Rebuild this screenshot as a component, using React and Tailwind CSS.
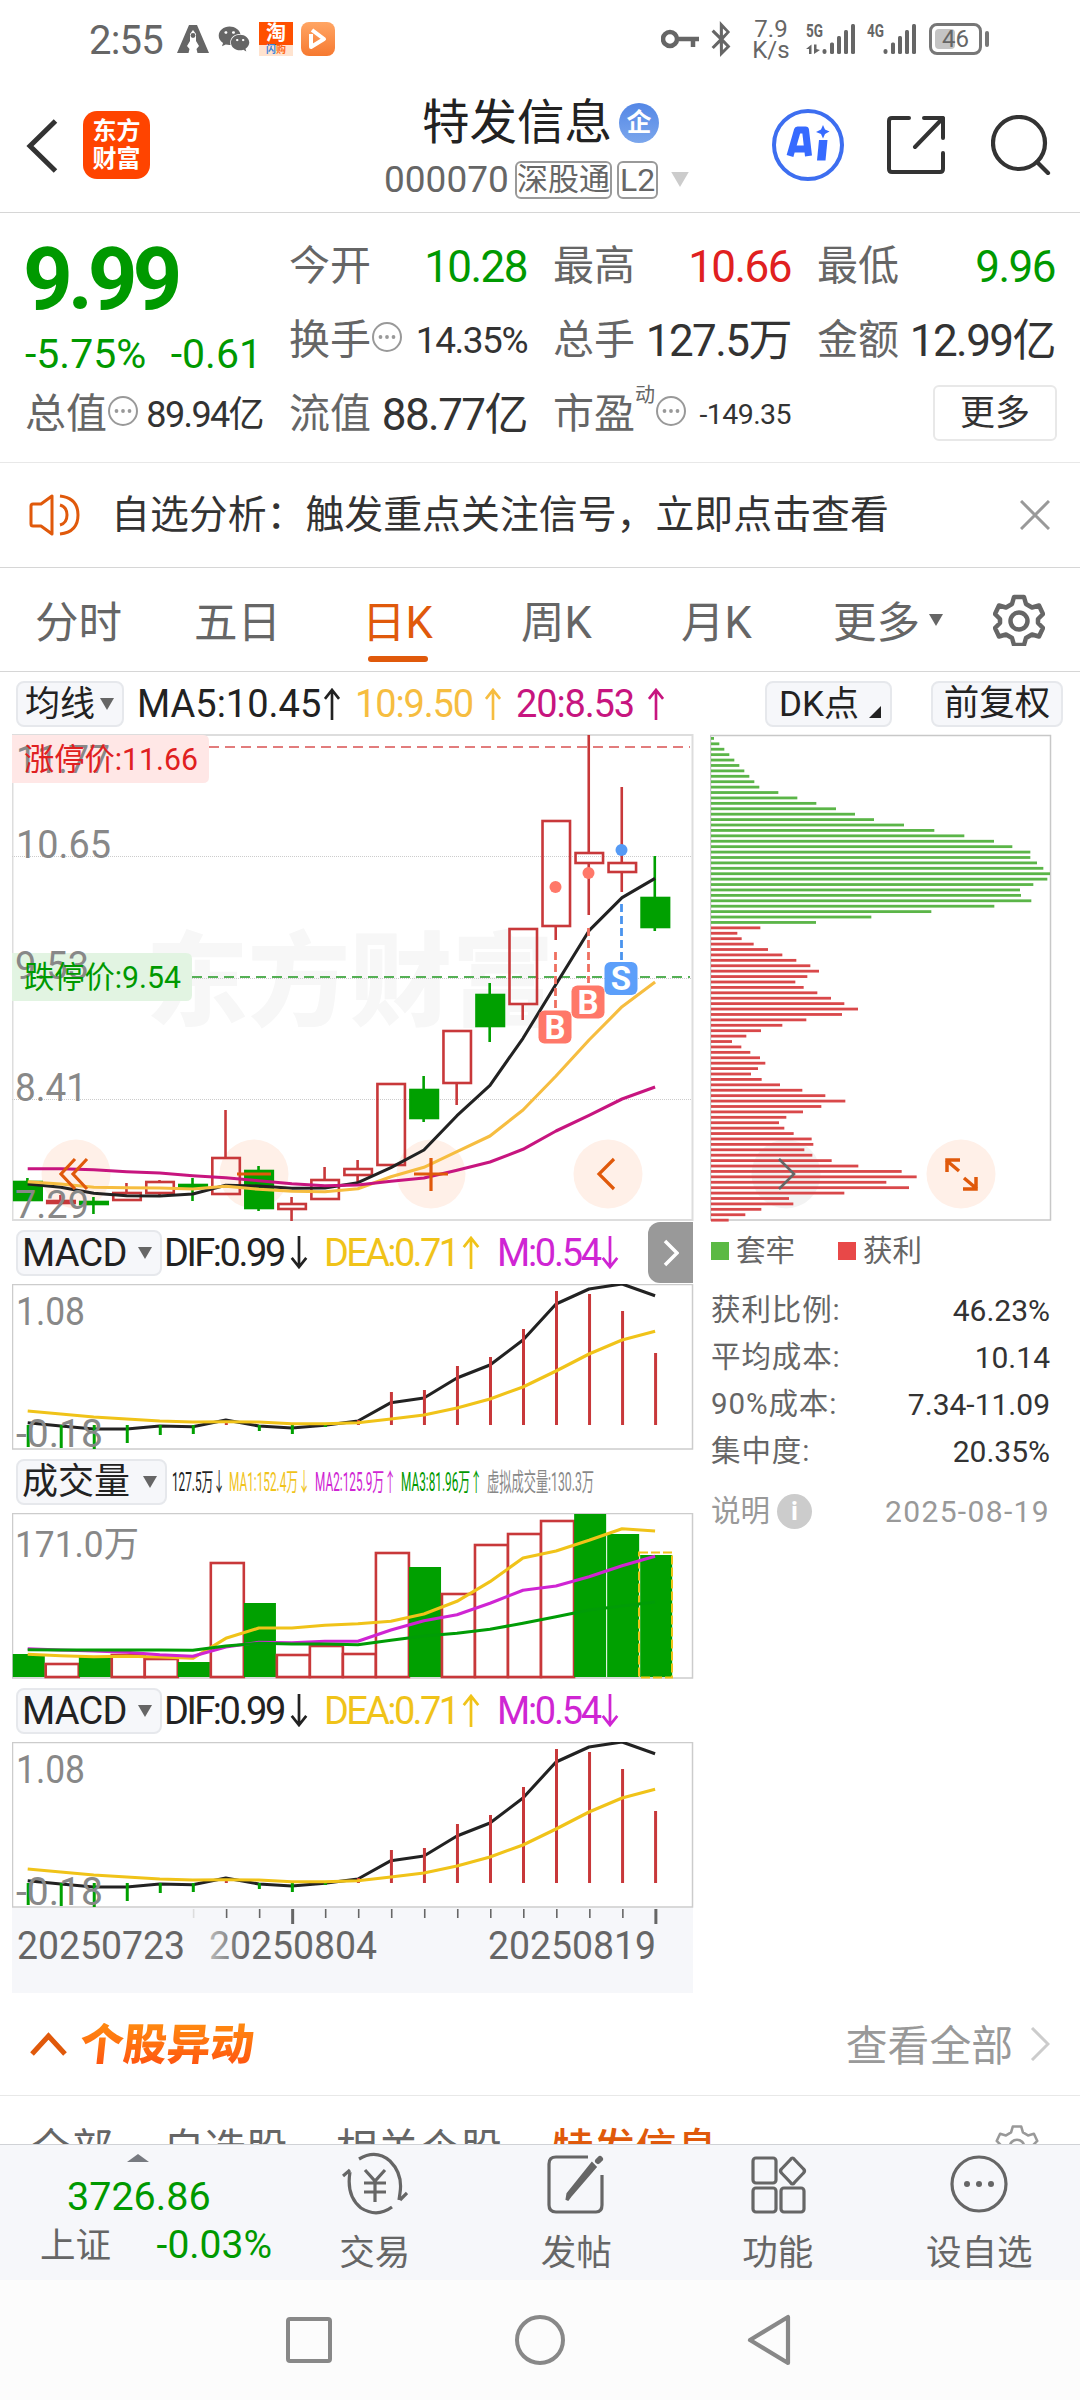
import React from 'react';
import { FaWeixin, FaBluetoothB } from 'react-icons/fa';

const STEP = 33.02;
const xAt = (i) => 27.7 + i * STEP;

// y values are page pixels, the svg viewBoxes below share that space
const CANDLES = [
  { up: false, high: 1178, top: 1181, bottom: 1201, low: 1201 },
  { up: true, high: 1195, top: 1200, bottom: 1204, low: 1205 },
  { up: false, high: 1197, top: 1201, bottom: 1205, low: 1214 },
  { up: true, high: 1183, top: 1192, bottom: 1201, low: 1201 },
  { up: true, high: 1180, top: 1181, bottom: 1194, low: 1195 },
  { up: false, high: 1178, top: 1184, bottom: 1189, low: 1201 },
  { up: true, high: 1110, top: 1157, bottom: 1195, low: 1195 },
  { up: false, high: 1166, top: 1170, bottom: 1209, low: 1211 },
  { up: true, high: 1197, top: 1203, bottom: 1210, low: 1221 },
  { up: true, high: 1167, top: 1179, bottom: 1200, low: 1200 },
  { up: true, high: 1160, top: 1168, bottom: 1176, low: 1182 },
  { up: true, high: 1083, top: 1083, bottom: 1166, low: 1166 },
  { up: false, high: 1076, top: 1089, bottom: 1119, low: 1122 },
  { up: true, high: 1030, top: 1030, bottom: 1084, low: 1105 },
  { up: false, high: 983, top: 994, bottom: 1027, low: 1042 },
  { up: true, high: 928, top: 928, bottom: 1005, low: 1020 },
  { up: true, high: 820, top: 820, bottom: 927, low: 940 },
  { up: true, high: 735, top: 852, bottom: 864, low: 915 },
  { up: true, high: 787, top: 862, bottom: 873, low: 892 },
  { up: false, high: 856, top: 897, bottom: 928, low: 931 },
];

const MA5 = [1184, 1187.3, 1193.3, 1195.7, 1196, 1194, 1185.3, 1186, 1188.3, 1188, 1182.7, 1167.7, 1150, 1115.7, 1085.3, 1038.3, 984.3, 930.7, 897.7, 878.3];
const MA10 = [1181.7, 1184, 1187.3, 1187.7, 1188, 1189, 1186.3, 1189.3, 1191.3, 1191.7, 1188.7, 1176.7, 1167.3, 1151.7, 1136, 1110, 1076, 1040, 1006.7, 982];
const MA20 = [1168.7, 1168.7, 1169.7, 1171.7, 1173, 1175.7, 1177.7, 1180.7, 1183.7, 1185.7, 1185, 1181.3, 1178, 1170.3, 1162, 1149.3, 1131, 1115.3, 1099, 1087];

const DIF = [1422.7, 1426, 1429, 1429, 1426, 1426.7, 1420, 1426, 1428, 1425.3, 1421, 1402.7, 1398, 1378, 1365, 1340, 1304, 1289, 1284, 1295.7];
const DEA = [1411, 1414, 1417, 1419, 1421, 1422, 1421.7, 1422, 1423.7, 1423.7, 1422.7, 1419, 1415, 1408, 1399, 1387, 1371, 1354, 1340, 1331.3];
const MACD = [1447, 1448, 1449, 1443, 1435, 1434, 1421, 1431, 1434, 1427, 1420, 1392, 1390, 1366, 1357, 1329, 1291, 1294, 1311, 1353];

const VOLUMES = [
  [0, 1654], [1, 1663], [0, 1657], [1, 1654], [1, 1658], [0, 1662], [1, 1562], [0, 1603], [1, 1654], [1, 1645],
  [1, 1653], [1, 1552], [0, 1567], [1, 1593], [1, 1544], [1, 1533], [1, 1520], [0, 1514], [0, 1534], [0, 1555],
];
const VMA1 = [1654.3, 1655.7, 1656.7, 1656.3, 1657, 1658.3, 1638.3, 1628, 1628, 1625.3, 1623.7, 1621.3, 1614, 1601.3, 1581.7, 1558, 1551, 1540.3, 1528.7, 1531];
const VMA2 = [1648.7, 1650, 1651, 1652.3, 1654.7, 1656.3, 1647, 1642.3, 1642.7, 1641.3, 1641.3, 1630, 1620.7, 1614.7, 1603.3, 1590.3, 1586, 1576.7, 1565.7, 1556.3];
const VMA3 = [1649.7, 1650, 1650, 1650, 1650, 1650.3, 1646, 1643.3, 1644, 1644, 1644.7, 1640.3, 1636, 1633.3, 1629.3, 1623.3, 1616.7, 1610, 1606, 1602];

const CHIPS = [
  9, 25, 40, 55, 70, 85, 100, 115, 130, 145, 202, 259, 316, 375, 432, 489, 579, 670, 760, 849, 904, 958, 958, 978, 997,
  1017, 1009, 967, 927, 930, 961, 850, 661, 481, 315, 148, 79, 92, 128, 171, 214, 256, 298, 324, 289, 253, 278, 319, 360,
  400, 441, 393, 286, 214, 150, 106, 63, 91, 118, 147, 163, 141, 120, 152, 207, 274, 343, 403, 331, 276, 226, 204, 220,
  248, 302, 307, 280, 304, 362, 442, 572, 617, 526, 594, 400, 234, 247, 151, 103, 53,
];

const points = (values) => values.map((y, i) => `${xAt(i)},${y}`).join(' ');

const Line = ({ values, color, width = 3.1 }) => (
  <polyline points={points(values)} fill="none" stroke={color} strokeWidth={width} strokeLinejoin="round" />
);

const ChartLabel = ({ x, y, width, children, color = '#888', size = 38 }) => (
  <text x={x} y={y} textLength={width} lengthAdjust="spacingAndGlyphs" fontSize={size} fill={color}>
    {children}
  </text>
);

const More = () => (
  <svg viewBox="0 0 32 32" className="h-8 w-8 shrink-0 -translate-y-1">
    <circle cx="16" cy="16" r="14" fill="none" stroke="#999" strokeWidth="2" />
    <circle cx="9.5" cy="16" r="1.9" fill="#999" />
    <circle cx="16" cy="16" r="1.9" fill="#999" />
    <circle cx="22.500" cy="16" r="1.9" fill="#999" />
  </svg>
);

const Down = ({ className }) => (
  <svg viewBox="0 0 14 12" className={className}>
    <path d="M0 0h14L7 12z" fill="currentColor" />
  </svg>
);

const Arrow = ({ up, className }) => (
  <svg viewBox="0 0 18 34" className={className} fill="none" stroke="currentColor" strokeWidth="2.8">
    <path d={up ? 'M9 34V2M1.500 11.500 9 2l7.500 9.500' : 'M9 0v32M1.500 22.500 9 32l7.500-9.500'} />
  </svg>
);

const Gear = ({ className, width = 4.5 }) => (
  <svg viewBox="0 0 52 52" className={className} fill="none" stroke="currentColor" strokeWidth={width} strokeLinejoin="round">
    <path d="M21 3h10l2 7 6 3.500 7-2 4 8.500-5 5v4l5 5-4 8.500-7-2-6 3.500-2 7H21l-2-7-6-3.500-7 2L2 34l5-5v-4l-5-5 4-8.500 7 2 6-3.500z" />
    <circle cx="26" cy="27" r="8.500" />
  </svg>
);

const Signal = ({ label, data }) => (
  <svg viewBox="0 0 50 32" className="h-8 w-[50px] shrink-0 overflow-visible" fill="#666">
    <text x="0" y="14" fontSize="18.500" fontWeight="700" textLength="17" lengthAdjust="spacingAndGlyphs">{label}</text>
    {data && <path d="M5.500 21.500V31H3v-5H0zM8 31v-9.500h2.500V26l3.500 1z" />}
    <rect x="16.500" y="26" width="4" height="5" rx="2" />
    <rect x="24" y="19.500" width="4" height="11.500" rx="1.500" />
    <rect x="31" y="13" width="4" height="18" rx="1.500" />
    <rect x="38" y="7" width="4" height="24" rx="1.500" />
    <rect x="45" y="1" width="4" height="30" rx="1.500" />
  </svg>
);

function StatusBar() {
  return (
    <div className="flex h-[78px] items-center pl-[89px] text-[#666]">
      <span className="w-[88px] shrink-0 pt-1 text-[40px] leading-none tracking-[-0.02em]">2:55</span>
      <svg viewBox="0 0 32 28" className="h-7 w-8 shrink-0">
        <path d="M12 0h8l12 28H20.500l-1-4 2.500-3-3-5V9l-3-4-3 4v7l-3 5 2.500 3-1 4H0z" fill="#666" />
        <circle cx="16" cy="10.500" r="2.400" fill="#666" />
      </svg>
      <FaWeixin className="ml-[9px] h-8 w-8 shrink-0" />
      <div className="ml-[9px] flex h-[34px] w-[34px] shrink-0 flex-col items-center bg-[#ff5000]">
        <span className="h-[23px] text-[20px] font-bold leading-[22px] text-white">淘</span>
        <span className="h-[11px] w-full bg-[#ffe3cf] text-center text-[10px] font-bold leading-[10px] text-[#ff6a1a]">
          <span className="text-[#3b82d8]">闪</span>购
        </span>
      </div>
      <div className="ml-2 flex h-[34px] w-[34px] shrink-0 items-center justify-center rounded-lg bg-gradient-to-b from-[#ffa563] to-[#f6792f]">
        <svg viewBox="0 0 20 24" className="h-6 w-5">
          <path d="M3 7v13l13-8L4 3" fill="none" stroke="white" strokeWidth="4" strokeLinejoin="round" />
        </svg>
      </div>
      <svg viewBox="0 0 40 20" className="ml-[326px] h-5 w-10 shrink-0" fill="none" stroke="#666" strokeWidth="4.500">
        <circle cx="9" cy="10" r="7" />
        <path d="M16 10h22M32 10v8" />
      </svg>
      <FaBluetoothB className="ml-[6px] h-9 w-[28px] shrink-0" />
      <div className="ml-[16px] flex w-[40px] shrink-0 flex-col items-center pt-0.5 text-[24px] leading-[21px]">
        <span>7.9</span>
        <span>K/s</span>
      </div>
      <div className="ml-[15px]">
        <Signal label="5G" data />
      </div>
      <div className="ml-[11px]">
        <Signal label="4G" />
      </div>
      <div className="relative ml-[12px] h-8 w-[53px] shrink-0 rounded-lg border-[3px] border-[#777] p-[3px]">
        <div className="h-full w-5 rounded-sm bg-[#c4c4c4]" />
        <span className="absolute inset-0 text-center text-[24px] leading-[27px]">46</span>
      </div>
      <div className="ml-[3px] h-4 w-1 shrink-0 rounded-sm bg-[#777]" />
    </div>
  );
}

function Header() {
  return (
    <header className="flex h-[135px] items-center border-b border-[#d6d6d6] pl-[26px]">
      <svg viewBox="0 0 32 54" className="mt-[2px] h-[54px] w-8" fill="none" stroke="#333" strokeWidth="5">
        <path d="M29.500 2 4 27l25.500 25" />
      </svg>
      <div className="ml-[25px] flex h-[68px] w-[67px] flex-col items-center justify-center rounded-[14px] bg-[#ff4400] text-[24px] font-bold leading-[28px] text-white">
        <span>东方</span>
        <span>财富</span>
      </div>
      <div className="ml-[233px] w-[310px] pt-[11px]">
        <div className="flex h-[58px] items-center pl-[39px]">
          <h1 className="text-[47.500px] leading-none text-[#222]">特发信息</h1>
          <span className="-mt-[2px] ml-[7px] flex h-10 w-10 items-center justify-center rounded-full bg-gradient-to-b from-[#5487e6] to-[#7ba6ec] text-[25px] font-bold text-white">企</span>
        </div>
        <div className="flex h-[54px] items-center pl-px text-[#666]">
          <span className="w-[131px] text-[37px] leading-none">000070</span>
          <span className="flex h-[38px] w-[97px] items-center justify-center rounded-md border-2 border-[#999] text-[31px] leading-none">深股通</span>
          <span className="ml-[5px] flex h-[38px] w-[41px] items-center justify-center rounded-md border-2 border-[#999] text-[32px] leading-none">L2</span>
          <Down className="ml-[11px] h-[15px] w-[22px] text-[#ccc]" />
        </div>
      </div>
      <svg viewBox="0 0 72 72" className="ml-[79px] h-[72px] w-[72px]">
        <circle cx="36" cy="36" r="34" fill="none" stroke="#3d6ef0" strokeWidth="4" />
        <path d="m51 16 2 4.500 4.500 2L53 25l-2 4.500-2-4.500-5-2 5-2.500z" fill="#366aff" />
        <path d="M18 47 25.500 21h8l3 26M22 40h14" fill="none" stroke="#366aff" strokeWidth="7" strokeLinejoin="round" />
        <path d="M47 31h8.500l-2 20.500H45z" fill="#366aff" />
      </svg>
      <svg viewBox="0 0 58 58" className="ml-[43px] h-[58px] w-[58px]" fill="none" stroke="#333" strokeWidth="4" strokeLinecap="round" strokeLinejoin="round">
        <path d="M22 2H5Q2 2 2 5v48q0 3 3 3h48q3 0 3-3V37" />
        <path d="M37 2h19v20M56 2 28 31" />
      </svg>
      <svg viewBox="0 0 60 60" className="ml-[46px] h-[60px] w-[60px]" fill="none" stroke="#333" strokeWidth="4.200" strokeLinecap="round">
        <circle cx="28" cy="28" r="26" />
        <path d="m46 47 11 11" />
      </svg>
    </header>
  );
}

const STATS = [
  { label: '今开', value: '10.28', color: 'text-[#009900]' },
  { label: '最高', value: '10.66', color: 'text-[#e02020]' },
  { label: '最低', value: '9.96', color: 'text-[#009900]' },
  { label: '换手', value: '14.35%', more: true, size: 'text-[37px] tracking-[-0.04em]' },
  { label: '总手', value: '127.5万' },
  { label: '金额', value: '12.99亿' },
];

const Stat = ({ label, value, color = 'text-[#333]', size = 'text-[44px] tracking-[-0.035em]', more, sup }) => (
  <div className="flex h-[74px] items-center">
    <span className="text-[41px] text-[#666]">{label}</span>
    {sup && <span className="-mr-1 w-[24px] -translate-y-5 text-[20px] text-[#666]">{sup}</span>}
    {more && <More />}
    <span className={`ml-auto whitespace-nowrap ${size} ${color}`}>{value}</span>
  </div>
);

function Quote() {
  return (
    <section className="h-[250px] border-b border-[#e8e8e8] pl-[25px] pt-[17px]">
      <div className="flex">
        <div className="w-[264px] text-[#009900]">
          <div className="-ml-[2px] pt-[3px] text-[87px] font-bold leading-[92px] tracking-[-0.06em]">9.99</div>
          <div className="flex w-[237px] justify-between pt-[4px] text-[41px] leading-[50px]">
            <span>-5.75%</span>
            <span>-0.61</span>
          </div>
        </div>
        <div className="grid h-[145px] grid-cols-[238px_238px_238px] gap-x-[26px]">
          {STATS.map((s) => (
            <Stat key={s.label} {...s} />
          ))}
        </div>
      </div>
      <div className="-mt-[1px] grid grid-cols-[238px_238px_238px_240px] gap-x-[26px]">
        <Stat label="总值" value="89.94亿" more size="text-[36px] tracking-[-0.045em]" />
        <Stat label="流值" value="88.77亿" />
        <Stat label="市盈" value="-149.35" sup="动" more size="text-[28.500px] tracking-[-0.02em]" />
        <button className="mt-[7px] ml-auto h-[56px] w-[124px] rounded-md border-2 border-[#e8e8e8] text-[35px] leading-none text-[#333]">更多</button>
      </div>
    </section>
  );
}

function Notice() {
  return (
    <div className="flex h-[105px] items-center border-b border-[#d6d6d6] pl-[29px]">
      <svg viewBox="0 0 52 42" className="h-[42px] w-[52px]" fill="none" stroke="#e0590b" strokeWidth="3" strokeLinejoin="round">
        <path d="M23 2v38L12 32H4q-2 0-2-2V12q0-2 2-2h8z" />
        <path d="M31 11q7 2 7 10t-7 10M31 2q18 2 18 19T31 40" />
      </svg>
      <span className="ml-[30px] text-[38.900px] text-[#333]">自选分析：触发重点关注信号，立即点击查看</span>
      <svg viewBox="0 0 30 30" className="ml-auto mr-[30px] h-[30px] w-[30px]" fill="none" stroke="#999" strokeWidth="3">
        <path d="m1 1 28 28M29 1 1 29" />
      </svg>
    </div>
  );
}

function PeriodTabs() {
  return (
    <nav className="flex h-[104px] items-center border-b border-[#d6d6d6] pl-[35px] text-[43.500px] text-[#666]">
      <span className="w-[159px] pt-[8px]">分时</span>
      <span className="w-[168px] pt-[8px]">五日</span>
      <span className="relative w-[159px] pt-[8px] text-[#e0590b]">
        日K
        <span className="absolute -bottom-[6px] left-[6px] h-[6px] w-[60px] rounded-full bg-[#e0590b]" />
      </span>
      <span className="w-[160px] pt-[8px]">周K</span>
      <span className="w-[152px] pt-[8px]">月K</span>
      <span className="pt-[8px]">更多</span>
      <Down className="ml-[9px] h-3 w-[14px]" />
      <Gear className="ml-auto mr-[35px] h-[52px] w-[52px]" />
    </nav>
  );
}

const Chip = ({ className, children }) => (
  <span className={`flex items-center rounded-lg border-2 border-[#e6e8ec] bg-[#f6f7fa] text-[#222] ${className}`}>{children}</span>
);

function MaBar() {
  return (
    <div className="flex h-[60px] items-center pl-4 text-[38px] leading-none">
      <Chip className="h-[46px] w-[108px] pl-[7px] text-[35px]">
        均线
        <Down className="ml-[5px] h-[12px] w-[14px] text-[#666]" />
      </Chip>
      <span className="ml-[13px] flex w-[218px] items-center text-[#222]">
        <span className="w-[185px]">MA5:10.45</span>
        <Arrow up className="h-[32px] w-[20px]" />
      </span>
      <span className="flex w-[161px] items-center text-[#f6bd40]">
        <span className="w-[128px] tracking-[-0.03em]">10:9.50</span>
        <Arrow up className="h-[32px] w-[20px]" />
      </span>
      <span className="flex items-center text-[#c7157f]">
        <span className="w-[130px] tracking-[-0.03em]">20:8.53</span>
        <Arrow up className="h-[32px] w-[20px]" />
      </span>
      <Chip className="ml-[99px] h-[46px] w-[127px] pl-3 text-[35px]">
        DK点
        <svg viewBox="0 0 12 12" className="mt-4 ml-2.5 h-3 w-3">
          <path d="M12 0v12H0z" fill="#222" />
        </svg>
      </Chip>
      <Chip className="ml-[39px] h-[46px] w-[132px] justify-center text-[35.500px]">前复权</Chip>
    </div>
  );
}

const Badge = ({ x, y, color, children }) => (
  <g>
    <rect x={x - 16.5} y={y} width="33" height="33" rx="6" fill={color} />
    <text x={x} y={y + 28} textAnchor="middle" fontSize="33" fontWeight="700" fill="white">{children}</text>
  </g>
);

function PriceChart() {
  return (
    <svg viewBox="12 734 682 488" className="h-[488px] w-[682px]">
      <rect x="12.500" y="735" width="680" height="485" fill="white" stroke="#ddd" strokeWidth="2" />
      <text x="146" y="1018" fontSize="102" fontWeight="900" fill="#f7f7f7" textLength="408" lengthAdjust="spacingAndGlyphs">东方财富</text>
      {[856, 978, 1099].map((y) => (
        <line key={y} x1="12" x2="692" y1={y + 0.5} y2={y + 0.5} stroke="#ccc" strokeDasharray="1 1" />
      ))}
      <line x1="209" x2="690" y1="747" y2="747" stroke="#e27c7c" strokeWidth="2" strokeDasharray="10 6" />
      <line x1="192" x2="690" y1="977" y2="977" stroke="#55b055" strokeWidth="2" strokeDasharray="10 6" />
      <path d="M12 735h191q6 0 6 6v36q0 6-6 6H12z" fill="#ffe7e6" />
      <path d="M12 953h174q6 0 6 6v36q0 6-6 6H12z" fill="#e2f4e2" />
      {[76, 254, 431, 608].map((x) => (
        <circle key={x} cx={x} cy="1174" r="34.500" fill="#fff0e8" />
      ))}
      {CANDLES.map((c, i) => {
        const x = xAt(i);
        const color = c.up ? '#c8383a' : '#00a000';
        return (
          <g key={i} stroke={color} strokeWidth="2.600">
            <line x1={x - 0.3} x2={x - 0.3} y1={c.high} y2={c.top} />
            <line x1={x - 0.3} x2={x - 0.3} y1={c.bottom} y2={c.low} />
            <rect x={x - 13.5} y={c.top + 1} width="27.500" height={Math.max(c.bottom - c.top - 2, 2)} fill={c.up ? 'none' : color} />
          </g>
        );
      })}
      <Line values={MA5} color="#222" />
      <Line values={MA10} color="#f6bd40" />
      <Line values={MA20} color="#c7157f" />
      <g fill="none" stroke="#e0590b" strokeWidth="3.200">
        <path d="m75 1159-14 15 14 15M87 1159l-14 15 14 15" />
        <path d="M237 1174h34M414 1174h34M431 1158v33" />
        <path d="m614 1159-15 15 15 15" />
      </g>
      <g strokeWidth="2.800" strokeDasharray="8 4">
        <path d="M555.500 952v56M588.500 928v55" stroke="#ef6f60" />
        <path d="M621.500 904v56" stroke="#4a94ee" />
      </g>
      <circle cx="555.500" cy="887" r="6" fill="#ff7869" />
      <circle cx="588.500" cy="873" r="6" fill="#ff7869" />
      <circle cx="621.500" cy="850" r="6" fill="#559af5" />
      <Badge x={555} y={1010.5} color="#ff7869">B</Badge>
      <Badge x={588} y={985.5} color="#ff7869">B</Badge>
      <Badge x={621} y={962} color="#5c9ffa">S</Badge>
      <ChartLabel x={16} y={773} width={94}>11.77</ChartLabel>
      <ChartLabel x={16} y={857.5} width={95}>10.65</ChartLabel>
      <ChartLabel x={15} y={979} width={74}>9.53</ChartLabel>
      <ChartLabel x={15} y={1100.5} width={72}>8.41</ChartLabel>
      <ChartLabel x={15} y={1217.5} width={74}>7.29</ChartLabel>
      <ChartLabel x={24} y={770} width={174} color="#e02020" size={31}>涨停价:11.66</ChartLabel>
      <ChartLabel x={24} y={988} width={157} color="#009900" size={31}>跌停价:9.54</ChartLabel>
    </svg>
  );
}

function MacdHeader() {
  return (
    <div className="flex h-[60px] items-center pl-1 pt-px text-[38px] leading-none">
      <Chip className="h-[46px] w-[146px] pl-[4px]">
        <span className="w-[116px] tracking-[-0.02em]">MACD</span>
        <Down className="h-[12px] w-[14px] text-[#666]" />
      </Chip>
      <span className="ml-[2px] flex w-[160px] items-center text-[#222]">
        <span className="w-[125px] tracking-[-0.065em]">DIF:0.99</span>
        <Arrow className="h-[33px] w-5" />
      </span>
      <span className="flex w-[173px] items-center text-[#f0c319]">
        <span className="w-[137px] tracking-[-0.07em]">DEA:0.71</span>
        <Arrow up className="h-[33px] w-5" />
      </span>
      <span className="flex items-center text-[#cf25d3]">
        <span className="w-[103px] tracking-[-0.06em]">M:0.54</span>
        <Arrow className="h-[33px] w-5" />
      </span>
    </div>
  );
}

function MacdChart() {
  return (
    <svg viewBox="12 1284 682 166" className="h-[166px] w-[682px]">
      <rect x="12.500" y="1284.500" width="680" height="164.500" fill="white" stroke="#ccc" strokeWidth="1.500" />
      <Line values={DIF} color="#222" />
      {MACD.map((y, i) => (
        <line key={i} x1={xAt(i) + 0.5} x2={xAt(i) + 0.5} y1="1425" y2={y} stroke={y > 1425 ? '#00a000' : '#c8383a'} strokeWidth="3" />
      ))}
      <Line values={DEA} color="#f0c319" />
      <ChartLabel x={16} y={1325} width={69}>1.08</ChartLabel>
      <ChartLabel x={16} y={1447} width={87}>-0.18</ChartLabel>
    </svg>
  );
}

const VOLUME_LEGEND = [
  { text: '127.5万↓', color: '#222', x: 0, w: 53 },
  { text: 'MA1:152.4万↓', color: '#f0c319', x: 57, w: 81 },
  { text: 'MA2:125.9万↑', color: '#cf25d3', x: 143, w: 81 },
  { text: 'MA3:81.96万↑', color: '#009900', x: 229, w: 81 },
  { text: '虚拟成交量:130.3万', color: '#888', x: 315, w: 107 },
];

function VolumeHeader() {
  return (
    <div className="flex h-[64px] items-center pl-1 leading-none">
      <Chip className="h-[46px] w-[151px] pl-[4px] text-[36px]">
        <span className="w-[121px]">成交量</span>
        <Down className="h-[12px] w-[14px] text-[#666]" />
      </Chip>
      <svg viewBox="0 0 430 34" className="ml-[5px] h-[34px] w-[430px]">
        {VOLUME_LEGEND.map((l) => (
          <text key={l.text} x={l.x} y="26" fontSize="25" fill={l.color} textLength={l.w} lengthAdjust="spacingAndGlyphs">{l.text}</text>
        ))}
      </svg>
    </div>
  );
}

function VolumeChart() {
  return (
    <svg viewBox="12 1513 682 166" className="h-[166px] w-[682px]">
      <rect x="12.500" y="1513.500" width="680" height="164.500" fill="white" stroke="#ccc" strokeWidth="1.500" />
      {VOLUMES.map(([up, y], i) => {
        const x = 12 + i * STEP;
        return up ? (
          <rect key={i} x={x + 0.7} y={y + 1} width="33" height={1676 - y} fill="white" stroke="#c8383a" strokeWidth="2.600" />
        ) : (
          <rect key={i} x={x + 0.8} y={y} width="32" height={1677 - y} fill="#00a000" />
        );
      })}
      <rect x="639" y="1552.500" width="33" height="125" fill="none" stroke="#f0c319" strokeWidth="2" strokeDasharray="9 3" />
      <Line values={VMA1} color="#f0c319" />
      <Line values={VMA2} color="#cf25d3" />
      <Line values={VMA3} color="#009c06" />
      <ChartLabel x={15} y={1557} width={124} size={36}>171.0万</ChartLabel>
    </svg>
  );
}

function DateAxis() {
  return (
    <svg viewBox="12 1908 681 85" className="h-[85px] w-[681px] bg-[#f6f7fa]">
      {CANDLES.map((_, i) => {
        if (i < 5) return null;
        const major = i === 8 || i === 19;
        return (
          <line key={i} x1={xAt(i) + 0.8} x2={xAt(i) + 0.8} y1="1909" y2={major ? 1924 : 1918} stroke={i === 5 ? '#ddd' : '#666'} strokeWidth={major ? 3 : 1.6} />
        );
      })}
      <defs>
        <linearGradient id="fade">
          <stop offset="0" stopColor="#bbb" />
          <stop offset="0.200" stopColor="#666" />
        </linearGradient>
      </defs>
      <ChartLabel x={17} y={1959} width={168} color="#666">20250723</ChartLabel>
      <ChartLabel x={209} y={1959} width={168} color="url(#fade)">20250804</ChartLabel>
      <ChartLabel x={488} y={1959} width={168} color="#666">20250819</ChartLabel>
    </svg>
  );
}

const COSTS = [
  ['获利比例:', '46.23%'],
  ['平均成本:', '10.14'],
  ['90%成本:', '7.34-11.09'],
  ['集中度:', '20.35%'],
];

function ChipPanel() {
  return (
    <div className="ml-[17px] w-[340px] text-[29.500px]">
      <svg viewBox="710 734 342 488" className="h-[488px] w-[342px]">
        <rect x="710.500" y="735.500" width="340" height="484.500" fill="white" stroke="#c8c8c8" strokeWidth="1.500" />
        <circle cx="786" cy="1174" r="34.500" fill="#f3f3f3" />
        {CHIPS.map((len, i) => (
          <rect key={i} x="711" y={737 + i * 5.413} width={len / 3} height="2.800" fill={i < 35 ? '#5bb548' : '#d9484a'} />
        ))}
        <path d="m779 1159 15 15-15 15" fill="none" stroke="#666" strokeWidth="2.600" />
        <circle cx="961" cy="1174" r="34.500" fill="#fff0e8" />
        <path d="M959 1171l-13-11M947 1172v-12h13M964 1178l13 11M976 1177v12h-13" fill="none" stroke="#e0590b" strokeWidth="3.500" />
      </svg>
      <div className="mt-[6px] flex h-[46px] items-center pl-px text-[#666]">
        <span className="h-[18px] w-[18px] bg-[#5bb944]" />
        <span className="ml-[7px] w-[102px]">套牢</span>
        <span className="h-[18px] w-[18px] bg-[#e84848]" />
        <span className="ml-[7px]">获利</span>
      </div>
      <div className="mt-[13px] pl-px">
        {COSTS.map(([label, value]) => (
          <div key={label} className="flex h-[47px] items-center justify-between">
            <span className="tracking-[0.03em] text-[#666]">{label}</span>
            <span className="text-[30px] text-[#333]">{value}</span>
          </div>
        ))}
      </div>
      <div className="mt-[11px] flex h-[50px] items-center pl-px text-[#999]">
        <span>说明</span>
        <span className="ml-[7px] flex h-[35px] w-[35px] items-center justify-center rounded-full bg-[#ccc] text-[26px] font-bold text-white">i</span>
        <span className="ml-auto text-[30px] tracking-[0.045em]">2025-08-19</span>
      </div>
    </div>
  );
}

function Charts() {
  return (
    <div className="flex pl-3">
      <div className="flex w-[681px] flex-col">
        <PriceChart />
        <div className="relative">
          <MacdHeader />
          <div className="absolute top-0 right-0 flex h-[61px] w-[45px] items-center justify-center rounded-l-xl bg-[#999]">
            <svg viewBox="0 0 16 28" className="h-7 w-4" fill="none" stroke="white" strokeWidth="3.500">
              <path d="m2 2 12 12L2 26" />
            </svg>
          </div>
        </div>
        <div className="mt-[2px]">
          <MacdChart />
        </div>
        <VolumeHeader />
        <div className="-mt-px">
          <VolumeChart />
        </div>
        <div className="mt-[1px]">
          <MacdHeader />
        </div>
        <div className="mt-[2px]">
          <MacdChart />
        </div>
        <DateAxis />
      </div>
      <ChipPanel />
    </div>
  );
}

function Movements() {
  return (
    <section>
      <div className="flex h-[103px] items-center border-b border-[#e8e8e8] pl-[30px]">
        <svg viewBox="0 0 37 24" className="h-6 w-[37px]" fill="none" stroke="#e0590b" strokeWidth="5">
          <path d="M2 22 18.500 4 35 22" />
        </svg>
        <h2 className="mt-[3px] ml-[13px] w-[176px] -skew-x-6 bg-gradient-to-b from-[#ff8a10] to-[#ff4d10] bg-clip-text text-[43.500px] font-black leading-[46px] text-transparent">个股异动</h2>
        <span className="ml-auto pt-[6px] text-[41.800px] text-[#999]">查看全部</span>
        <svg viewBox="0 0 20 34" className="ml-[17px] mr-[30px] h-[34px] w-5" fill="none" stroke="#ccc" strokeWidth="3">
          <path d="m2 1 16 16L2 33" />
        </svg>
      </div>
      <div className="flex h-[48px] items-start overflow-hidden pl-[30px] text-[41.500px] leading-[48px] text-[#666]">
        <span className="mt-[30px] w-[133px]">全部</span>
        <span className="mt-[30px] w-[173px]">自选股</span>
        <span className="mt-[30px] w-[216px]">相关个股</span>
        <span className="mt-[30px] font-medium text-[#e0590b]">特发信息</span>
        <Gear className="mt-[28px] ml-auto mr-[41px] h-[44px] w-[44px] shrink-0 text-[#999]" width={3} />
      </div>
    </section>
  );
}

const Action = ({ label, children }) => (
  <div className="flex w-[201.500px] flex-col items-center">
    <svg viewBox="0 0 66 66" className="h-[66px] w-[66px]" fill="none" stroke="#666" strokeWidth="3.200">
      {children}
    </svg>
    <span className="mt-[11px] text-[35.500px] leading-[50px]">{label}</span>
  </div>
);

function BottomBar() {
  return (
    <div className="flex h-[136px] border-t border-[#d0d2d6] bg-[#f6f7fa] text-[#666]">
      <div className="w-[275px] pl-[40px]">
        <svg viewBox="0 0 22 8" className="mt-[9px] ml-[87px] h-2 w-[22px]">
          <path d="M0 8 11 0l11 8z" fill="#777a80" />
        </svg>
        <div className="mt-[12px] ml-[27px] text-[39.500px] leading-[46px] text-[#009900]">3726.86</div>
        <div className="mt-[1px] flex w-[232px] items-center justify-between text-[35.500px] leading-[50px]">
          <span>上证</span>
          <span className="-mt-[2px] text-[39px] text-[#009900]">-0.03%</span>
        </div>
      </div>
      <div className="flex pt-[6px]">
        <Action label="交易">
          <path d="M17 8Q34-2 48 10 61 23 58 42l-1 7M58 49l7-7M50 56Q35 67 19 57 4 45 8 21M1 25l7-6" />
          <path d="m23 19 10 11 10-11M22 32h22M22 41h22M33 30v21" />
        </Action>
        <Action label="发帖">
          <path d="M45 6H13Q6 6 6 13v41q0 7 7 7h40q6 0 6-7V24" />
          <path d="M52 16 27 45l-3 4 1-6 24-30z" fill="#666" />
          <path d="m55 10 2-2" strokeWidth="6" strokeLinecap="round" />
        </Action>
        <Action label="功能">
          <rect x="8" y="7" width="23" height="25" rx="3" />
          <rect x="8" y="37" width="23" height="24" rx="3" />
          <rect x="36" y="37" width="23" height="24" rx="3" />
          <path d="M45.500 8.500q2-3 4 0l9 9.500q2 2 0 4l-9 9.500q-2 3-4 0l-9-9.500q-2-2 0-4z" />
        </Action>
        <Action label="设自选">
          <circle cx="33" cy="33" r="27" />
          <g fill="#666" stroke="none">
            <circle cx="21" cy="33" r="3" />
            <circle cx="33" cy="33" r="3" />
            <circle cx="45" cy="33" r="3" />
          </g>
        </Action>
      </div>
    </div>
  );
}

function SystemNav() {
  return (
    <div className="flex h-[120px] items-center bg-[#fcfcfc]">
      <span className="ml-[286px] h-[46px] w-[46px] rounded border-4 border-[#888]" />
      <span className="ml-[183px] h-[50px] w-[50px] rounded-full border-4 border-[#888]" />
      <svg viewBox="0 0 44 52" className="ml-[182px] h-[52px] w-[44px]" fill="none" stroke="#888" strokeWidth="4.200" strokeLinejoin="round">
        <path d="M41 3v46L3 26z" />
      </svg>
    </div>
  );
}

export default function App() {
  return (
    <div className="h-[2400px] w-[1080px] overflow-hidden bg-white font-['Roboto','Noto_Sans_CJK_SC',sans-serif]">
      <StatusBar />
      <Header />
      <Quote />
      <Notice />
      <PeriodTabs />
      <div className="pt-[2px]">
        <MaBar />
      </div>
      <Charts />
      <Movements />
      <BottomBar />
      <SystemNav />
    </div>
  );
}
